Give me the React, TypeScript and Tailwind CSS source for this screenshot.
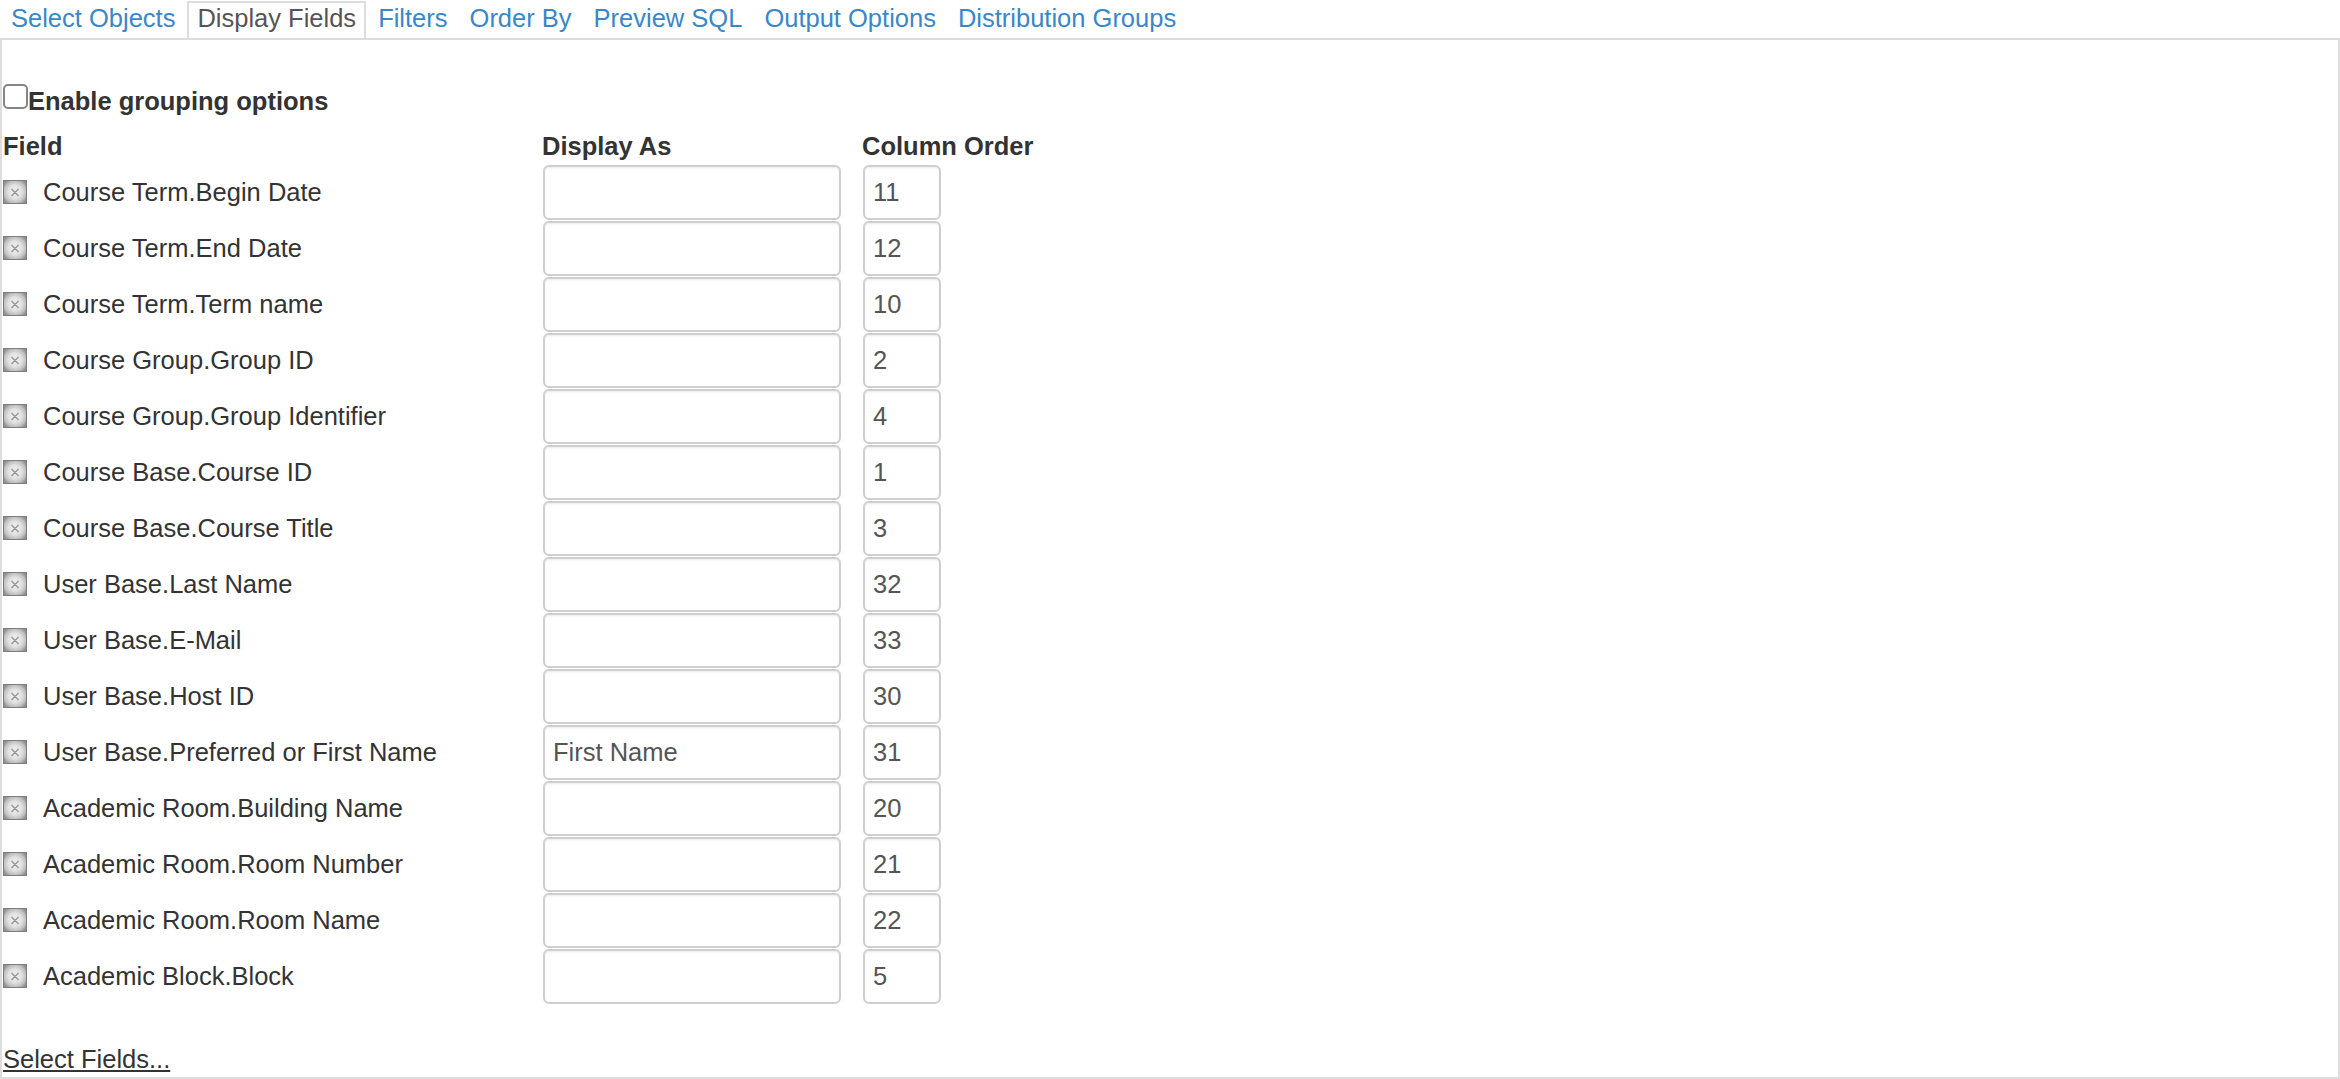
import { useState } from 'react';

type FieldRow = { name: string; displayAs: string; order: string };

const initialRows: FieldRow[] = [
  { name: 'Course Term.Begin Date', displayAs: '', order: '11' },
  { name: 'Course Term.End Date', displayAs: '', order: '12' },
  { name: 'Course Term.Term name', displayAs: '', order: '10' },
  { name: 'Course Group.Group ID', displayAs: '', order: '2' },
  { name: 'Course Group.Group Identifier', displayAs: '', order: '4' },
  { name: 'Course Base.Course ID', displayAs: '', order: '1' },
  { name: 'Course Base.Course Title', displayAs: '', order: '3' },
  { name: 'User Base.Last Name', displayAs: '', order: '32' },
  { name: 'User Base.E-Mail', displayAs: '', order: '33' },
  { name: 'User Base.Host ID', displayAs: '', order: '30' },
  { name: 'User Base.Preferred or First Name', displayAs: 'First Name', order: '31' },
  { name: 'Academic Room.Building Name', displayAs: '', order: '20' },
  { name: 'Academic Room.Room Number', displayAs: '', order: '21' },
  { name: 'Academic Room.Room Name', displayAs: '', order: '22' },
  { name: 'Academic Block.Block', displayAs: '', order: '5' },
];

const tabs = [
  'Select Objects',
  'Display Fields',
  'Filters',
  'Order By',
  'Preview SQL',
  'Output Options',
  'Distribution Groups',
];

// old-style bevelled "remove" button
const RemoveIcon = () => (
  <svg width="24" height="24" viewBox="0 0 24 24" className="shrink-0">
    <defs>
      <radialGradient id="rm-bevel" cx="50%" cy="50%" r="60%">
        <stop offset="0" stopColor="#f2f2f2" />
        <stop offset="0.5" stopColor="#e0e0e0" />
        <stop offset="0.8" stopColor="#bdbdbd" />
        <stop offset="1" stopColor="#8e8e8e" />
      </radialGradient>
    </defs>
    <rect x="0.5" y="0.5" width="23" height="23" fill="url(#rm-bevel)" stroke="#7f7f7f" />
    <path d="M9 9.5 L15 15.5 M15 9.5 L9 15.5" stroke="#9c9c9c" strokeWidth="1.7" strokeLinecap="round" />
  </svg>
);

export default function App() {
  const [rows, setRows] = useState(initialRows);
  const [grouping, setGrouping] = useState(false);
  const active = 'Display Fields';

  const update = (i: number, key: 'displayAs' | 'order', value: string) => {
    setRows((prev) => prev.map((r, idx) => (idx === i ? { ...r, [key]: value } : r)));
  };

  return (
    <div className="w-[2340px] h-[1079px] flex flex-col overflow-hidden bg-white text-[#333] text-[25.5px] leading-[31px] font-['Liberation_Sans',Arial,sans-serif]">
      {/* Tabs */}
      <div className="flex h-[38px] pt-[1px] pl-[1px]">
        {tabs.map((tab) => (
          <div
            key={tab}
            className={`h-[37px] px-[8px] mr-[2px] border-2 border-b-0 whitespace-nowrap cursor-pointer ${
              tab === active ? 'border-[#dddddd] text-[#555]' : 'border-transparent text-[#3a87c8]'
            }`}
          >
            {tab}
          </div>
        ))}
      </div>

      {/* Panel */}
      <div className="flex-1 border-2 border-[#dddddd] flex flex-col pt-[46px] pb-[2px]">
        <label className="flex items-start">
          <input
            type="checkbox"
            checked={grouping}
            onChange={(e) => setGrouping(e.target.checked)}
            className="appearance-none w-[25px] h-[25px] -mt-[2px] ml-[1px] border-2 border-[#858585] rounded-[5px] bg-white shrink-0"
          />
          <span className="font-bold">Enable grouping options</span>
        </label>

        <div className="grid grid-cols-[519px_298px_78px] gap-x-[22px] mt-[14px] font-bold">
          <div className="pl-[1px]">Field</div>
          <div className="-ml-[1px] whitespace-nowrap">Display As</div>
          <div className="-ml-[1px] whitespace-nowrap">Column Order</div>
        </div>

        <div className="mt-[2px] flex flex-col">
          {rows.map((row, i) => (
            <div key={row.name} className="grid grid-cols-[519px_298px_78px] gap-x-[22px] h-[56px] items-center">
              <div className="flex items-center gap-[16px] pl-[1px]">
                <RemoveIcon />
                <span className="whitespace-nowrap">{row.name}</span>
              </div>
              <input
                value={row.displayAs}
                onChange={(e) => update(i, 'displayAs', e.target.value)}
                className="h-[55px] w-[298px] px-[8px] border-2 border-[#cfcfcf] rounded-[6px] text-[#555] outline-none shadow-[inset_0_1px_2px_rgba(0,0,0,0.08)]"
              />
              <input
                value={row.order}
                onChange={(e) => update(i, 'order', e.target.value)}
                className="h-[55px] w-[78px] px-[8px] border-2 border-[#cfcfcf] rounded-[6px] text-[#555] outline-none shadow-[inset_0_1px_2px_rgba(0,0,0,0.08)]"
              />
            </div>
          ))}
        </div>

        <a href="#" className="mt-[40px] self-start pl-[1px] text-[#333] underline">
          Select Fields...
        </a>
      </div>
    </div>
  );
}
